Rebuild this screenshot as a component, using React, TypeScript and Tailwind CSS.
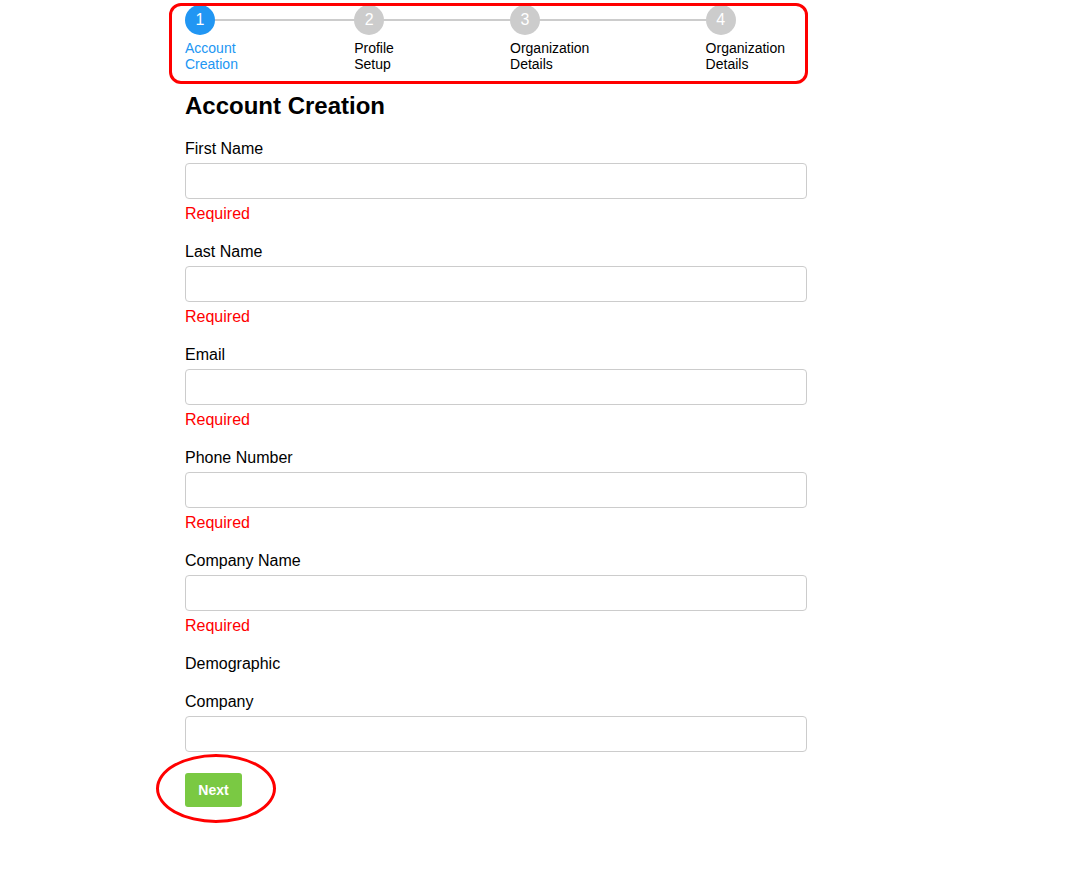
import React from 'react'

const steps = [
  { n: 1, label: 'Account Creation' },
  { n: 2, label: 'Profile Setup' },
  { n: 3, label: 'Organization Details' },
  { n: 4, label: 'Organization Details' }
]

const fields = [
  { label: 'First Name', required: true },
  { label: 'Last Name', required: true },
  { label: 'Email', required: true },
  { label: 'Phone Number', required: true },
  { label: 'Company Name', required: true }
]

const Stepper = ({ active }: { active: number }) => (
  <div className="relative flex w-[600px] justify-between pt-[5px]">
    <div className="absolute left-[15px] top-[19px] h-[2px] w-[521px] bg-[#cccccc]" />
    {steps.map((s) => {
      const isActive = s.n === active
      return (
        <div key={s.n} className="relative flex w-min flex-col items-start">
          <div
            className={
              isActive
                ? 'flex h-[30px] w-[30px] items-center justify-center rounded-full bg-[#2196f3] text-[16px] text-white'
                : 'flex h-[30px] w-[30px] items-center justify-center rounded-full bg-[#cccccc] text-[16px] text-white'
            }
          >
            {s.n}
          </div>
          <p
            className={
              isActive
                ? 'mt-[5px] text-[14px] leading-[16px] text-[#2196f3]'
                : 'mt-[5px] text-[14px] leading-[16px] text-black'
            }
          >
            {s.label}
          </p>
        </div>
      )
    })}
  </div>
)

const Field = ({ label, required }: { label: string; required?: boolean }) => (
  <div className="mb-[20px] flex flex-col">
    <label className="mb-[5px] text-[16px] leading-[18px] text-black">{label}</label>
    <input
      type="text"
      className="h-[36px] w-full rounded-[4px] border border-[#cccccc] bg-white px-2 outline-none"
    />
    {required && (
      <span className="mt-[6px] text-[16px] leading-[18px] text-[#ff0000]">Required</span>
    )}
  </div>
)

export default function App() {
  return (
    <div
      className="relative min-h-[870px] w-full bg-white text-black"
      style={{ fontFamily: '"Liberation Sans", Arial, sans-serif' }}
    >
      <div className="ml-[185px] w-[622px]">
        <Stepper active={1} />
        <h2 className="mt-[20px] mb-[20px] text-[24px] font-bold leading-[28px]">Account Creation</h2>
        {fields.map((f) => (
          <Field key={f.label} label={f.label} required={f.required} />
        ))}
        <p className="mb-[20px] text-[16px] leading-[18px]">Demographic</p>
        <div className="flex flex-col">
          <label className="mb-[5px] text-[16px] leading-[18px]">Company</label>
          <input
            type="text"
            className="h-[36px] w-full rounded-[4px] border border-[#cccccc] bg-white px-2 outline-none"
          />
        </div>
        <button className="mt-[21px] h-[34px] w-[57px] rounded-[3px] bg-[#7ac943] text-[14px] font-bold text-white">
          Next
        </button>
      </div>

      {/* annotation marks */}
      <div className="pointer-events-none absolute left-[169px] top-[3px] h-[81px] w-[639px] rounded-[12px] border-[3px] border-[#ff0000]" />
      <div className="pointer-events-none absolute left-[156px] top-[754px] h-[69px] w-[120px] rounded-[50%] border-[3px] border-[#ff0000]" />
    </div>
  )
}
